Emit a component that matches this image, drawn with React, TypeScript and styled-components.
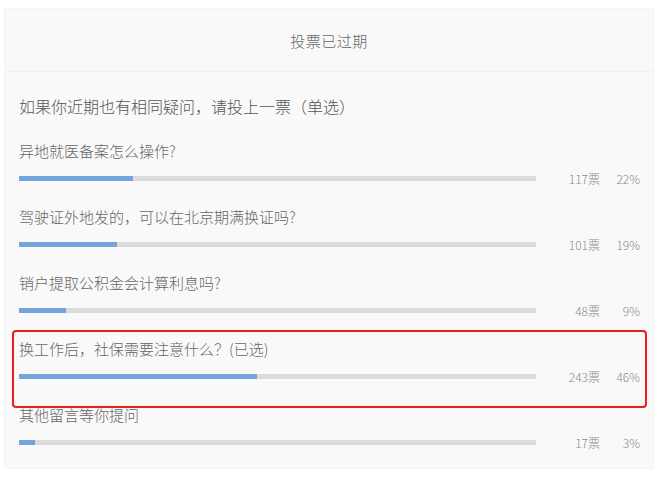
import styled, { createGlobalStyle } from "styled-components";

const GlobalStyle = createGlobalStyle`
  html, body {
    margin: 0;
    padding: 0;
    background: #ffffff;
  }
  body {
    font-family: "Noto Sans CJK SC", "Noto Sans", sans-serif;
    font-weight: 300;
  }
`;

interface OptionData {
  label: string;
  votes: number;
  percent: number;
  selected?: boolean;
}

const options: OptionData[] = [
  { label: "异地就医备案怎么操作?", votes: 117, percent: 22 },
  { label: "驾驶证外地发的，可以在北京期满换证吗?", votes: 101, percent: 19 },
  { label: "销户提取公积金会计算利息吗?", votes: 48, percent: 9 },
  { label: "换工作后，社保需要注意什么？(已选)", votes: 243, percent: 46, selected: true },
  { label: "其他留言等你提问", votes: 17, percent: 3 },
];

const Page = styled.div`
  padding: 8px 6px 11px 4px;
`;

const Card = styled.div`
  background: #f9f9f9;
  border: 1px solid #f4f4f4;
`;

const Header = styled.div`
  height: 62px;
  display: flex;
  align-items: center;
  justify-content: center;
  border-bottom: 1px solid #f0f0f0;
  font-size: 15px;
  color: #666;
  letter-spacing: 0.5px;
`;

const Body = styled.div`
  padding: 23px 13px 8px 14px;
`;

const Question = styled.div`
  font-size: 16px;
  line-height: 22px;
  color: #555;
  margin-bottom: 13px;
`;

const Row = styled.div<{ $selected?: boolean }>`
  position: relative;
  height: 66px;
  padding-top: 10px;
  box-sizing: border-box;

  &::after {
    content: "";
    display: ${(p) => (p.$selected ? "block" : "none")};
    position: absolute;
    top: 2px;
    left: -7px;
    right: -7px;
    height: 78px;
    border: 2.5px solid #e6211a;
    border-radius: 4px;
    box-sizing: border-box;
    pointer-events: none;
  }
`;

const Label = styled.div`
  font-size: 15px;
  line-height: 22px;
  color: #666;
`;

const Stats = styled.div`
  display: flex;
  align-items: center;
  height: 20px;
  margin-top: 6px;
`;

const Track = styled.div`
  flex: 1;
  height: 5px;
  background: #dcdcdc;
`;

const Fill = styled.div`
  height: 100%;
  background: #71a5db;
`;

const Votes = styled.span`
  width: 64px;
  text-align: right;
  font-size: 12px;
  color: #888;
`;

const Percent = styled.span`
  width: 40px;
  text-align: right;
  font-size: 12px;
  color: #888;
`;

export default function App() {
  return (
    <>
      <GlobalStyle />
      <Page>
        <Card>
          <Header>投票已过期</Header>
          <Body>
            <Question>如果你近期也有相同疑问，请投上一票（单选）</Question>
            {options.map((o) => (
              <Row key={o.label} $selected={o.selected}>
                <Label>{o.label}</Label>
                <Stats>
                  <Track>
                    <Fill style={{ width: `${o.percent}%` }} />
                  </Track>
                  <Votes>{o.votes}票</Votes>
                  <Percent>{o.percent}%</Percent>
                </Stats>
              </Row>
            ))}
          </Body>
        </Card>
      </Page>
    </>
  );
}
